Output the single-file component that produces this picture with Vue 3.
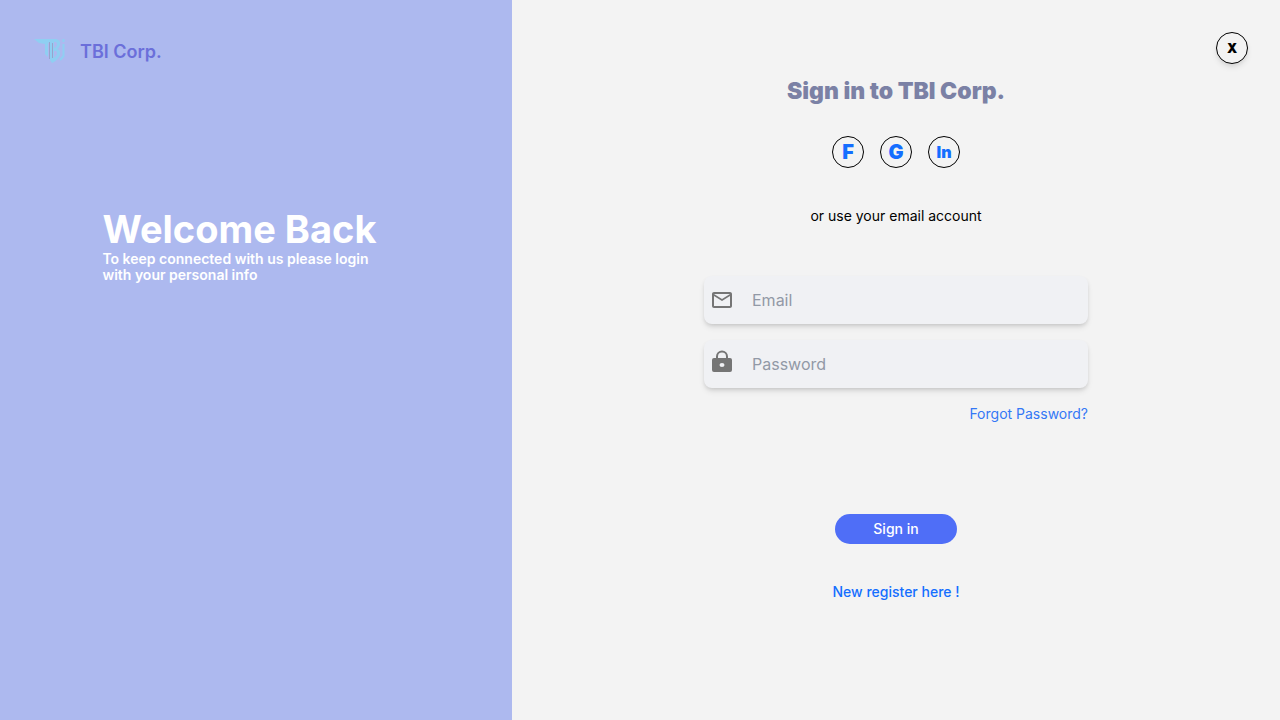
<script setup>
import { ref } from 'vue'

const email = ref('')
const password = ref('')
const providers = [
  { label: 'F', name: 'Facebook' },
  { label: 'G', name: 'Google' },
  { label: 'In', name: 'LinkedIn', small: true },
]
</script>

<template>
  <main class="page">
    <section class="welcome">
      <header class="brand">
        <svg class="logo" viewBox="0 0 36 32" aria-hidden="true">
          <path d="M2 3H24Q29 4 28 9Q27 12 25 13Q29 14 28 19Q26 24 20 27L18 24V7H16V21L13 18V8L7 7Z" fill="#8fcff2" />
          <path d="M22 6H24Q26 8 24 11L22 12ZM22 15H24Q26 17 24 20L22 22Z" fill="#adb9ef" />
          <path d="M17.500 6V23M20.500 7V22" fill="none" stroke="#98a3cc" stroke-width="1" />
          <path d="M31.500 8V20L28 24M31.500 3V6" fill="none" stroke="#8fcff2" stroke-width="2" />
        </svg>
        <span class="brand-name">TBI Corp.</span>
      </header>
      <div class="greeting">
        <h1>Welcome Back</h1>
        <p>To keep connected with us please login<br />with your personal info</p>
      </div>
    </section>

    <section class="login">
      <button class="round close" type="button" aria-label="Close">X</button>
      <h2>Sign in to TBI Corp.</h2>
      <div class="providers">
        <button
          v-for="p in providers"
          :key="p.name"
          class="round provider"
          :class="{ small: p.small }"
          type="button"
          :title="p.name"
        >{{ p.label }}</button>
      </div>
      <p class="hint">or use your email account</p>
      <form class="form" @submit.prevent>
        <label class="field">
          <svg viewBox="0 0 24 24" aria-hidden="true">
            <path d="M22 6c0-1.100-.9-2-2-2H4c-1.100 0-2 .9-2 2v12c0 1.100.9 2 2 2h16c1.100 0 2-.9 2-2V6zm-2 0l-8 5-8-5h16zm0 12H4V8l8 5 8-5v10z" fill="#757575" />
          </svg>
          <input v-model="email" type="email" placeholder="Email" aria-label="Email" />
        </label>
        <label class="field">
          <svg class="lock" viewBox="0 0 24 28" aria-hidden="true">
            <path fill-rule="evenodd" d="M4 8H6V6.500a6 6 0 0 1 12 0V8H20a2 2 0 0 1 2 2V20a2 2 0 0 1-2 2H4a2 2 0 0 1-2-2V10a2 2 0 0 1 2-2ZM8 8H16V6.500a4 4 0 0 0-8 0ZM12 13a2.500 2 0 1 0 0 4a2.500 2 0 1 0 0-4Z" fill="#757575" />
          </svg>
          <input v-model="password" type="password" placeholder="Password" aria-label="Password" />
        </label>
        <a class="forgot" href="#">Forgot Password?</a>
        <button class="submit" type="submit">Sign in</button>
      </form>
      <a class="register" href="#">New register here !</a>
    </section>
  </main>
</template>

<style>
body {
  margin: 0;
}
</style>

<style scoped>
.page {
  display: grid;
  grid-template-columns: 2fr 3fr;
  min-height: 100vh;
  font-family: Inter, "Liberation Sans", sans-serif;
  font-size: 14px;
  line-height: 16px;
  background: #f3f3f3;
  color: #000;
}
h1,
h2,
p {
  margin: 0;
}
button,
input {
  font: inherit;
  padding: 0;
}
button {
  cursor: pointer;
}
a {
  color: #146eff;
  text-decoration: none;
}
.welcome {
  background: #adb9ef;
}
.brand {
  display: flex;
  align-items: center;
  gap: 12px;
  padding: 36px 32px 0;
}
.logo {
  width: 36px;
  height: 32px;
}
.brand-name {
  color: #6b6fda;
  font-size: 18px;
  line-height: 30px;
  font-weight: 600;
}
.greeting {
  margin: 139px 20% 0;
  color: #fff;
  font-weight: 600;
  white-space: nowrap;
}
h1 {
  font-size: 38px;
  line-height: 44px;
  font-weight: 700;
}
.login {
  position: relative;
  display: flex;
  flex-direction: column;
  align-items: center;
}
.round {
  box-sizing: border-box;
  width: 32px;
  height: 32px;
  border: 1px solid #000;
  border-radius: 50%;
  background: transparent;
  font-weight: 900;
}
.close {
  position: absolute;
  top: 32px;
  right: 32px;
  color: #000;
  background: #f3f3f3;
  font-size: 13px;
  box-shadow: 0 4px 6px -1px rgba(0, 0, 0, 0.1), 0 2px 4px -1px rgba(0, 0, 0, 0.06);
}
h2 {
  margin-top: 77px;
  color: #7b81a5;
  font-size: 23px;
  line-height: 28px;
  font-weight: 900;
}
.providers {
  display: flex;
  gap: 16px;
  margin-top: 31px;
}
.provider {
  color: #146eff;
  font-size: 20px;
}
.provider.small {
  font-size: 16px;
}
.hint {
  margin-top: 40px;
}
.form {
  display: flex;
  flex-direction: column;
  gap: 16px;
  width: 50%;
  margin-top: 52px;
}
.field {
  display: flex;
  align-items: center;
  gap: 18px;
  box-sizing: border-box;
  height: 48px;
  padding: 0 6px;
  border-radius: 8px;
  background: #f0f1f4;
  box-shadow: 0 4px 6px -1px rgba(0, 0, 0, 0.1), 0 2px 4px -1px rgba(0, 0, 0, 0.12);
}
.field svg {
  flex: none;
  width: 24px;
  height: 24px;
}
.field .lock {
  height: 28px;
}
.field input {
  flex: 1;
  min-width: 0;
  border: 0;
  outline: 0;
  background: transparent;
  font-size: 16px;
  line-height: 24px;
}
.field input::placeholder {
  color: #9299a6;
  opacity: 1;
}
.forgot {
  align-self: flex-end;
  margin-top: 2px;
  color: #3478f6;
}
.submit {
  align-self: center;
  width: 122px;
  height: 30px;
  margin-top: 76px;
  border: 0;
  border-radius: 15px;
  background: #4f6ef7;
  color: #fff;
  font-weight: 500;
}
.register {
  margin-top: 40px;
  font-weight: 500;
}
</style>
